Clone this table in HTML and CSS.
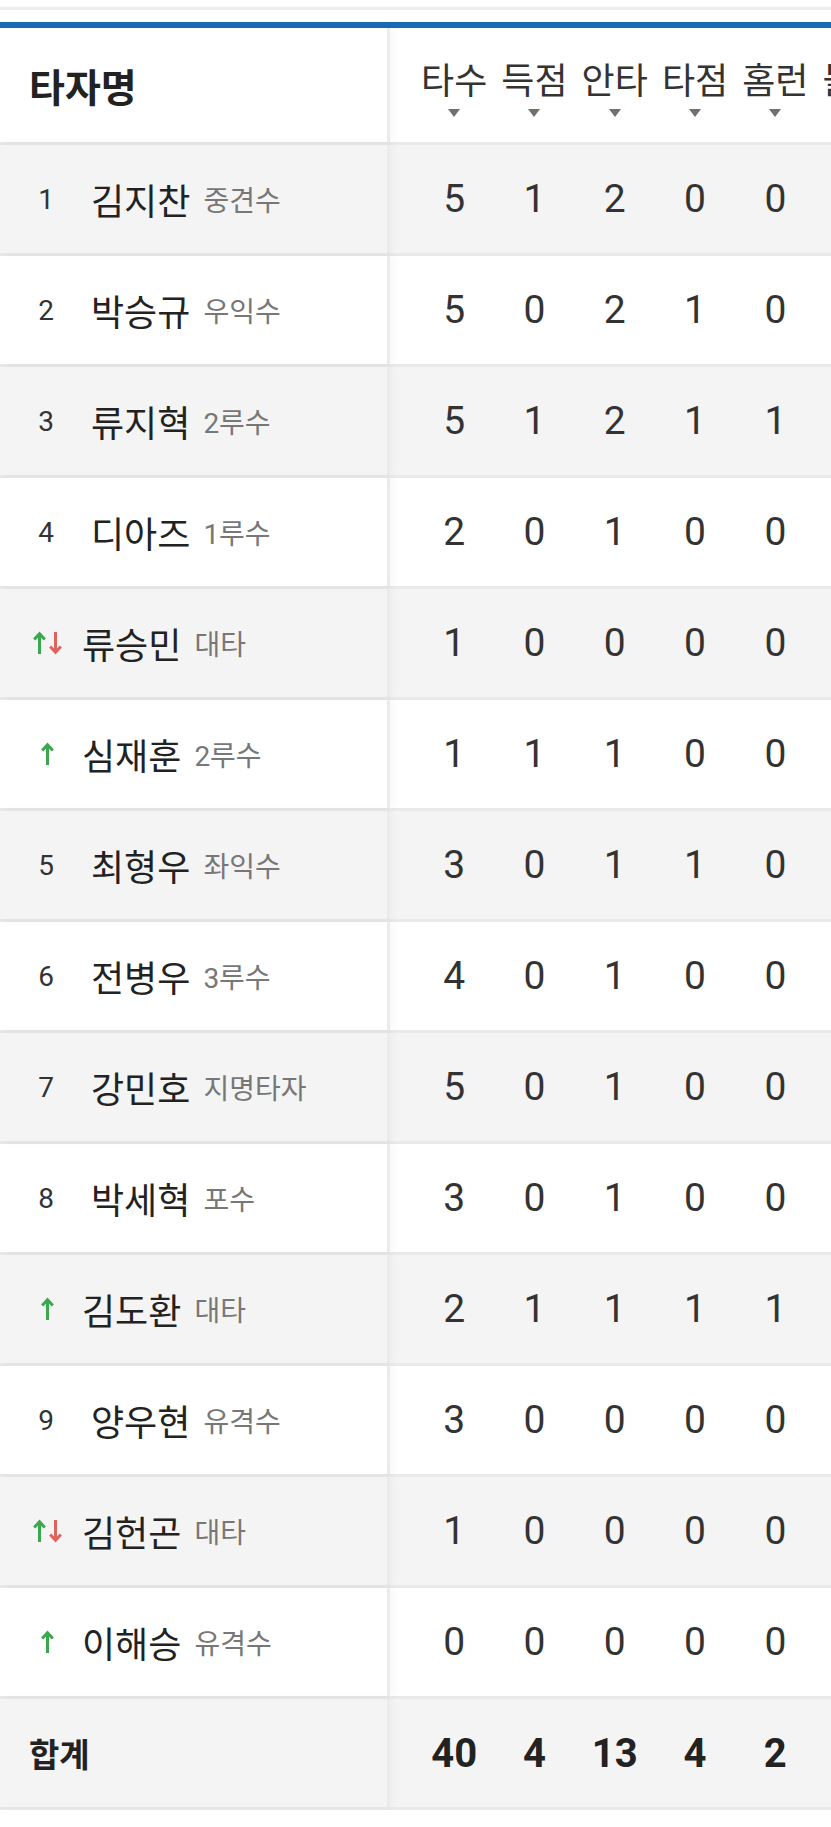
FILE: index.html
```html
<!DOCTYPE html>
<html lang="ko">
<head>
<meta charset="utf-8">
<title>타자 기록</title>
<link rel="stylesheet" href="styles.css">
</head>
<body>
<div class="page">
  <div class="top-line"></div>
  <div class="blue-bar"></div>
  <div class="table">
    <div class="row head">
      <div class="name-cell"><span class="head-title">타자명</span></div>
      <div class="stats">
        <div class="stat th"><span class="lbl">타수</span><span class="tri"></span></div>
        <div class="stat th"><span class="lbl">득점</span><span class="tri"></span></div>
        <div class="stat th"><span class="lbl">안타</span><span class="tri"></span></div>
        <div class="stat th"><span class="lbl">타점</span><span class="tri"></span></div>
        <div class="stat th"><span class="lbl">홈런</span><span class="tri"></span></div>
        <div class="stat th"><span class="lbl">볼넷</span><span class="tri"></span></div>
      </div>
    </div>

    <div class="row alt">
      <div class="name-cell"><span class="lead">1</span><span class="pname">김지찬</span><span class="pos">중견수</span></div>
      <div class="stats"><div class="stat">5</div><div class="stat">1</div><div class="stat">2</div><div class="stat">0</div><div class="stat">0</div><div class="stat"></div></div>
    </div>
    <div class="row">
      <div class="name-cell"><span class="lead">2</span><span class="pname">박승규</span><span class="pos">우익수</span></div>
      <div class="stats"><div class="stat">5</div><div class="stat">0</div><div class="stat">2</div><div class="stat">1</div><div class="stat">0</div><div class="stat"></div></div>
    </div>
    <div class="row alt">
      <div class="name-cell"><span class="lead">3</span><span class="pname">류지혁</span><span class="pos">2루수</span></div>
      <div class="stats"><div class="stat">5</div><div class="stat">1</div><div class="stat">2</div><div class="stat">1</div><div class="stat">1</div><div class="stat"></div></div>
    </div>
    <div class="row">
      <div class="name-cell"><span class="lead">4</span><span class="pname">디아즈</span><span class="pos">1루수</span></div>
      <div class="stats"><div class="stat">2</div><div class="stat">0</div><div class="stat">1</div><div class="stat">0</div><div class="stat">0</div><div class="stat"></div></div>
    </div>
    <div class="row alt">
      <div class="name-cell sub"><span class="lead"><svg class="arr" width="13" height="24" viewBox="0 0 13 24"><path d="M6.5 23V3M1.2 8.6L6.5 2.8l5.3 5.8" fill="none" stroke="#3aa84c" stroke-width="3"/></svg><svg class="arr" width="15" height="24" viewBox="0 0 15 24"><path d="M7.5 1v20M2.2 15.4l5.3 5.8 5.3-5.8" fill="none" stroke="#e0625c" stroke-width="3"/></svg></span><span class="pname">류승민</span><span class="pos">대타</span></div>
      <div class="stats"><div class="stat">1</div><div class="stat">0</div><div class="stat">0</div><div class="stat">0</div><div class="stat">0</div><div class="stat"></div></div>
    </div>
    <div class="row">
      <div class="name-cell sub"><span class="lead one"><svg class="arr" width="13" height="24" viewBox="0 0 13 24"><path d="M6.5 23V3M1.2 8.6L6.5 2.8l5.3 5.8" fill="none" stroke="#3aa84c" stroke-width="3"/></svg></span><span class="pname">심재훈</span><span class="pos">2루수</span></div>
      <div class="stats"><div class="stat">1</div><div class="stat">1</div><div class="stat">1</div><div class="stat">0</div><div class="stat">0</div><div class="stat"></div></div>
    </div>
    <div class="row alt">
      <div class="name-cell"><span class="lead">5</span><span class="pname">최형우</span><span class="pos">좌익수</span></div>
      <div class="stats"><div class="stat">3</div><div class="stat">0</div><div class="stat">1</div><div class="stat">1</div><div class="stat">0</div><div class="stat"></div></div>
    </div>
    <div class="row">
      <div class="name-cell"><span class="lead">6</span><span class="pname">전병우</span><span class="pos">3루수</span></div>
      <div class="stats"><div class="stat">4</div><div class="stat">0</div><div class="stat">1</div><div class="stat">0</div><div class="stat">0</div><div class="stat"></div></div>
    </div>
    <div class="row alt">
      <div class="name-cell"><span class="lead">7</span><span class="pname">강민호</span><span class="pos">지명타자</span></div>
      <div class="stats"><div class="stat">5</div><div class="stat">0</div><div class="stat">1</div><div class="stat">0</div><div class="stat">0</div><div class="stat"></div></div>
    </div>
    <div class="row">
      <div class="name-cell"><span class="lead">8</span><span class="pname">박세혁</span><span class="pos">포수</span></div>
      <div class="stats"><div class="stat">3</div><div class="stat">0</div><div class="stat">1</div><div class="stat">0</div><div class="stat">0</div><div class="stat"></div></div>
    </div>
    <div class="row alt">
      <div class="name-cell sub"><span class="lead one"><svg class="arr" width="13" height="24" viewBox="0 0 13 24"><path d="M6.5 23V3M1.2 8.6L6.5 2.8l5.3 5.8" fill="none" stroke="#3aa84c" stroke-width="3"/></svg></span><span class="pname">김도환</span><span class="pos">대타</span></div>
      <div class="stats"><div class="stat">2</div><div class="stat">1</div><div class="stat">1</div><div class="stat">1</div><div class="stat">1</div><div class="stat"></div></div>
    </div>
    <div class="row">
      <div class="name-cell"><span class="lead">9</span><span class="pname">양우현</span><span class="pos">유격수</span></div>
      <div class="stats"><div class="stat">3</div><div class="stat">0</div><div class="stat">0</div><div class="stat">0</div><div class="stat">0</div><div class="stat"></div></div>
    </div>
    <div class="row alt">
      <div class="name-cell sub"><span class="lead"><svg class="arr" width="13" height="24" viewBox="0 0 13 24"><path d="M6.5 23V3M1.2 8.6L6.5 2.8l5.3 5.8" fill="none" stroke="#3aa84c" stroke-width="3"/></svg><svg class="arr" width="15" height="24" viewBox="0 0 15 24"><path d="M7.5 1v20M2.2 15.4l5.3 5.8 5.3-5.8" fill="none" stroke="#e0625c" stroke-width="3"/></svg></span><span class="pname">김헌곤</span><span class="pos">대타</span></div>
      <div class="stats"><div class="stat">1</div><div class="stat">0</div><div class="stat">0</div><div class="stat">0</div><div class="stat">0</div><div class="stat"></div></div>
    </div>
    <div class="row">
      <div class="name-cell sub"><span class="lead one"><svg class="arr" width="13" height="24" viewBox="0 0 13 24"><path d="M6.5 23V3M1.2 8.6L6.5 2.8l5.3 5.8" fill="none" stroke="#3aa84c" stroke-width="3"/></svg></span><span class="pname">이해승</span><span class="pos">유격수</span></div>
      <div class="stats"><div class="stat">0</div><div class="stat">0</div><div class="stat">0</div><div class="stat">0</div><div class="stat">0</div><div class="stat"></div></div>
    </div>

    <div class="row alt total">
      <div class="name-cell"><span class="total-title">합계</span></div>
      <div class="stats"><div class="stat">40</div><div class="stat">4</div><div class="stat">13</div><div class="stat">4</div><div class="stat">2</div><div class="stat"></div></div>
    </div>
  </div>
</div>
</body>
</html>
```

FILE: styles.css
```css
html, body {
  margin: 0;
  padding: 0;
  background: #ffffff;
}
body {
  font-family: "Roboto", "Noto Sans CJK KR", sans-serif;
  color: #333333;
}
.page {
  width: 831px;
  overflow: hidden;
  padding-top: 7px;
}
.top-line {
  height: 3px;
  background: #ededed;
}
.blue-bar {
  margin-top: 12px;
  height: 6px;
  background: #1b6ab6;
}
.table {
  width: 100%;
}
.row {
  display: flex;
  height: 108px;
  border-bottom: 3px solid #e9e9e9;
  background: #ffffff;
}
.row.head {
  height: 114px;
}
.row.alt {
  background: #f4f4f4;
}
.name-cell {
  flex: 0 0 390px;
  width: 390px;
  box-sizing: border-box;
  border-right: 3px solid #ebebeb;
  box-shadow: 3px 0 8px rgba(0, 0, 0, 0.035);
  display: flex;
  align-items: center;
  padding-left: 28px;
}
.head-title {
  font-size: 39px;
  font-weight: 700;
  color: #222222;
  margin-left: 1px;
}
.lead {
  width: 36px;
  display: flex;
  justify-content: center;
  align-items: center;
  font-size: 28px;
  color: #333333;
}
.arr {
  display: block;
}
.sub .lead {
  justify-content: flex-start;
  padding-left: 5px;
  box-sizing: border-box;
}
.sub .lead.one {
  justify-content: center;
  padding-left: 2px;
}
.sub .lead .arr + .arr {
  margin-left: 2px;
}
.pname {
  margin-left: 27px;
  font-size: 36px;
  font-weight: 400;
  color: #222222;
}
.sub .pname {
  margin-left: 18px;
}
.pos {
  margin-left: 13px;
  font-size: 28px;
  color: #777777;
}
.stats {
  display: flex;
  padding-left: 24px;
  flex: 0 0 auto;
}
.stat {
  width: 80.3px;
  flex: 0 0 80.3px;
  display: flex;
  align-items: center;
  justify-content: center;
  font-size: 39px;
  color: #333333;
}
.stat.th {
  flex-direction: column;
  justify-content: flex-start;
  padding-top: 33px;
  box-sizing: border-box;
}
.lbl {
  font-size: 36px;
  line-height: 42px;
  color: #333333;
  white-space: nowrap;
}
.tri {
  margin-top: 6px;
  width: 0;
  height: 0;
  border-left: 6px solid transparent;
  border-right: 6px solid transparent;
  border-top: 8px solid #6f6f6f;
}
.total-title {
  font-size: 33px;
  font-weight: 700;
  color: #222222;
  margin-left: 1px;
}
.total .stat {
  font-weight: 700;
  font-size: 40px;
  color: #222222;
}
```
